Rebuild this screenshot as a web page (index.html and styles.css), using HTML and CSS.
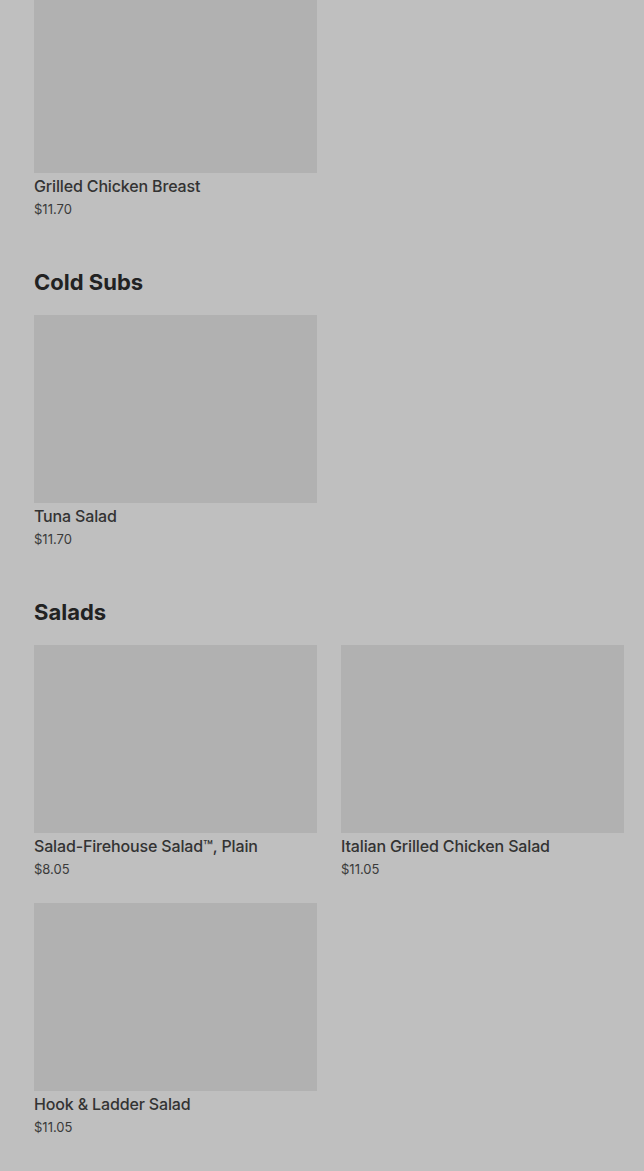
FILE: index.html
```html
<!DOCTYPE html>
<html lang="en">
<head>
  <meta charset="UTF-8" />
  <meta name="viewport" content="width=device-width, initial-scale=1.0"/>
  <title>Menu</title>
  <link rel="stylesheet" href="styles.css">
</head>
<body>
  <div class="menu">
    <div class="section">
      <div class="grid">
        <div class="item">
          <div class="thumb"></div>
          <div class="name">Grilled Chicken Breast</div>
          <div class="price">$11.70</div>
        </div>
      </div>
    </div>

    <div class="section">
      <h2>Cold Subs</h2>
      <div class="grid">
        <div class="item">
          <div class="thumb"></div>
          <div class="name">Tuna Salad</div>
          <div class="price">$11.70</div>
        </div>
      </div>
    </div>

    <div class="section">
      <h2>Salads</h2>
      <div class="grid">
        <div class="item">
          <div class="thumb"></div>
          <div class="name">Salad-Firehouse Salad™, Plain</div>
          <div class="price">$8.05</div>
        </div>
        <div class="item">
          <div class="thumb"></div>
          <div class="name">Italian Grilled Chicken Salad</div>
          <div class="price">$11.05</div>
        </div>
        <div class="item">
          <div class="thumb"></div>
          <div class="name">Hook &amp; Ladder Salad</div>
          <div class="price">$11.05</div>
        </div>
      </div>
    </div>
  </div>
</body>
</html>
```

FILE: styles.css
```css
body {
  margin: 0;
  font-family: Inter, 'Noto Sans', sans-serif;
  background-color: #bfbfbf;
  color: #333;
  overflow: hidden;
}
.menu {
  padding: 0 20px 0 34px;
  margin-top: -15px;
}
.section + .section {
  margin-top: 50px;
}
.section h2 {
  margin: 0 0 19px;
  font-size: 22px;
  line-height: 28px;
  font-weight: 700;
  letter-spacing: 0;
  color: #222;
}
.grid {
  display: grid;
  grid-template-columns: 283px 283px;
  column-gap: 24px;
  row-gap: 25px;
}
.thumb {
  height: 188px;
  background-color: #b1b1b1;
}
.name {
  margin-top: 3px;
  font-size: 16px;
  line-height: 20px;
  font-weight: 500;
  letter-spacing: -0.15px;
  color: #333;
}
.price {
  margin-top: 4px;
  font-size: 13px;
  line-height: 18px;
  color: #3a3a3a;
}
```
